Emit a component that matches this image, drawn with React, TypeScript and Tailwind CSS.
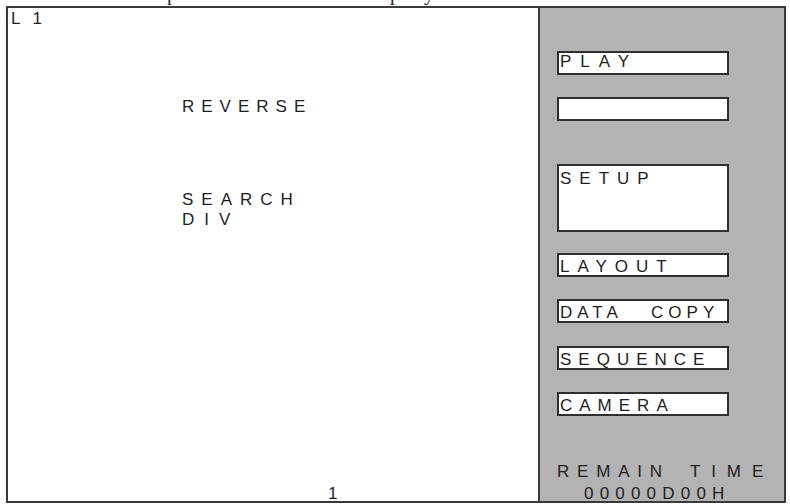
import React from "react";

const sans = { fontFamily: '"Liberation Sans", Arial, sans-serif' };

function Box({
  children,
  className,
}: {
  children?: React.ReactNode;
  className: string;
}) {
  return (
    <div
      className={
        "w-[172px] h-[24px] shrink-0 border-2 border-[#2f2f2f] bg-white pl-[1px] text-[17px] leading-[17px] text-[#1e1e1e] whitespace-pre " +
        className
      }
    >
      {children}
    </div>
  );
}

export default function App() {
  return (
    <div className="w-[790px] h-[504px] bg-white overflow-hidden flex flex-col" style={sans}>
      {/* descenders of a caption line cut off above */}
      <div className="h-[6px] overflow-hidden shrink-0">
        <div
          className="mt-[-17px] flex text-[20px] leading-[20px] text-[#222]"
          style={{ fontFamily: '"Liberation Serif", "Times New Roman", serif' }}
        >
          <span className="ml-[167px]">p</span>
          <span className="ml-[213px]">p</span>
          <span className="ml-[24px]">y</span>
        </div>
      </div>

      <div className="ml-[6px] w-[780px] h-[497px] shrink-0 border-2 border-[#3a3a3a] flex">
        {/* left display area */}
        <div className="w-[532px] shrink-0 border-r-2 border-[#3a3a3a] bg-white flex flex-col text-[17px] leading-[20px] text-[#1e1e1e]">
          <div className="pt-[1px] pl-[3px] tracking-[4px] whitespace-pre">L 1</div>
          <div className="mt-[68px] ml-[174px] tracking-[7px]">REVERSE</div>
          <div className="mt-[73px] ml-[174px] tracking-[8px]">SEARCH</div>
          <div className="ml-[174px] tracking-[10px]">DIV</div>
          <div className="mt-auto pl-[320px] leading-[15px]">1</div>
        </div>

        {/* right menu panel */}
        <div className="flex-1 bg-[#b3b3b3] pl-[17px] flex flex-col">
          <Box className="mt-[43px] tracking-[9px]">PLAY</Box>
          <Box className="mt-[22px]" />
          <Box className="mt-[43px] !h-[68px] pt-[4px] tracking-[8px]">SETUP</Box>
          <Box className="mt-[21px] pt-[3px] tracking-[8px]">LAYOUT</Box>
          <Box className="mt-[22px] pt-[3px] tracking-[5px]">{"DATA   COPY"}</Box>
          <Box className="mt-[23px] pt-[3px] tracking-[7px]">SEQUENCE</Box>
          <Box className="mt-[22px] pt-[3px] tracking-[7px]">CAMERA</Box>

          <div className="mt-auto text-[17px] leading-[15px] text-[#1e1e1e]">
            <div className="flex">
              <span className="tracking-[7.8px]">REMAIN</span>
              <span className="ml-[20px] tracking-[10.9px]">TIME</span>
            </div>
            <div className="mt-[7px] pl-[27px] tracking-[6.2px]">00000D00H</div>
          </div>
        </div>
      </div>
    </div>
  );
}
